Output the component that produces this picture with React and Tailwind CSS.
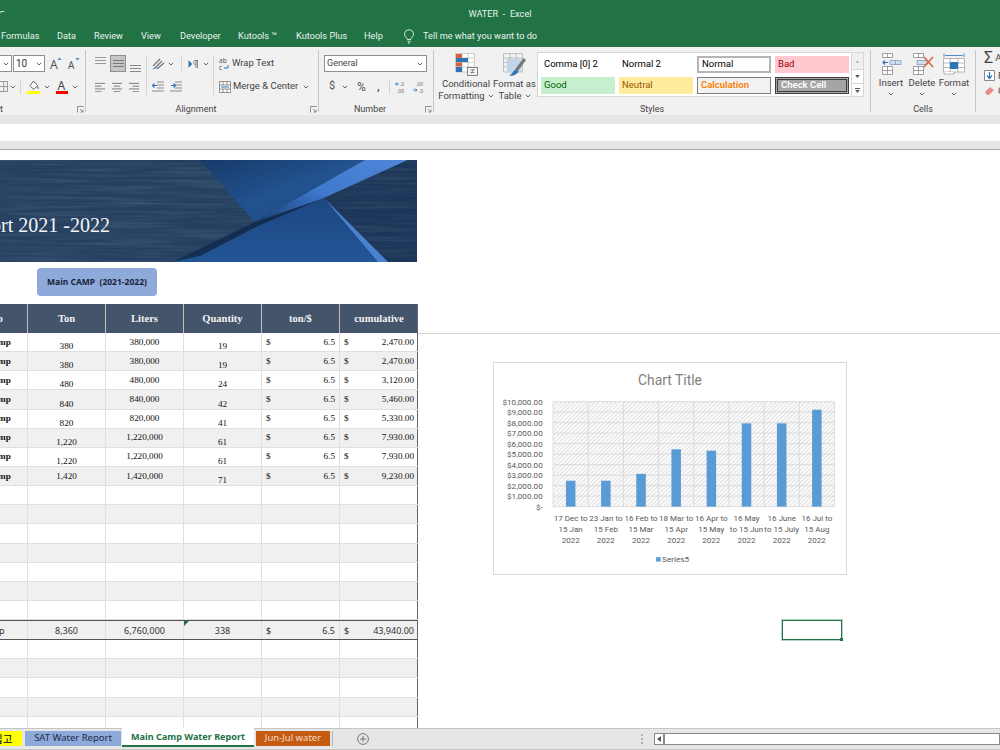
const menuTabs = [
  { label: 'Formulas', cls: 'ml-[1px] w-[56px]' },
  { label: 'Data', cls: 'w-[37px]' },
  { label: 'Review', cls: 'w-[47px]' },
  { label: 'View', cls: 'w-[39px]' },
  { label: 'Developer', cls: 'w-[58px]' },
  { label: 'Kutools ™', cls: 'w-[58px]' },
  { label: 'Kutools Plus', cls: 'w-[68px]' },
  { label: 'Help', cls: 'w-[39px]' },
]

const rows = [
  { ton: '380', liters: '380,000', qty: '19', total: '2,470.00' },
  { ton: '380', liters: '380,000', qty: '19', total: '2,470.00' },
  { ton: '480', liters: '480,000', qty: '24', total: '3,120.00' },
  { ton: '840', liters: '840,000', qty: '42', total: '5,460.00' },
  { ton: '820', liters: '820,000', qty: '41', total: '5,330.00' },
  { ton: '1,220', liters: '1,220,000', qty: '61', total: '7,930.00' },
  { ton: '1,220', liters: '1,220,000', qty: '61', total: '7,930.00' },
  { ton: '1,420', liters: '1,420,000', qty: '71', total: '9,230.00', tonTop: true },
]

const chartData = [
  { value: 2470, lines: ['17 Dec to', '15 Jan', '2022'] },
  { value: 2470, lines: ['23 Jan to', '15 Feb', '2022'] },
  { value: 3120, lines: ['16 Feb to', '15 Mar', '2022'] },
  { value: 5460, lines: ['18 Mar to', '15 Apr', '2022'] },
  { value: 5330, lines: ['16 Apr to', '15 May', '2022'] },
  { value: 7930, lines: ['16 May', 'to 15 Jun', '2022'] },
  { value: 7930, lines: ['16 June', 'to 15 July', '2022'] },
  { value: 9230, lines: ['16 Jul to', '15 Aug', '2022'] },
]

const yLabels = ['$10,000.00', '$9,000.00', '$8,000.00', '$7,000.00', '$6,000.00', '$5,000.00', '$4,000.00', '$3,000.00', '$2,000.00', '$1,000.00', '$-']

const grid = 'grid grid-cols-[28px_78px_78px_78px_78px_78px]'
const cell = 'border-r border-b border-[#dfdfdf] overflow-hidden'

function Chev({ className = '' }) {
  return (
    <svg viewBox="0 0 6 4" className={`h-[4px] w-[6px] shrink-0 ${className}`}>
      <path d="M0.8 0.8 3 3 5.2 0.8" fill="none" stroke="#666" strokeWidth="1" />
    </svg>
  )
}

function Lines({ widths, className = '' }) {
  return (
    <svg viewBox="0 0 12 10" className={`h-[10px] w-[12px] shrink-0 ${className}`}>
      {widths.map((w, i) => (
        <rect key={i} x={w[0]} y={i * 3 + 0.5} width={w[1]} height="1.2" fill="#8a8a8a" />
      ))}
    </svg>
  )
}

function Launcher() {
  return (
    <svg viewBox="0 0 7 7" className="absolute bottom-[2px] right-[1px] h-[7px] w-[7px]">
      <path d="M0.5 6.5V0.5H6.5M3 3 6 6M6 3.5V6H3.5" fill="none" stroke="#777" strokeWidth="0.8" />
    </svg>
  )
}

function Group({ width, label, children }) {
  return (
    <div className={`relative flex h-[62px] shrink-0 flex-col border-r border-[#c6c6c6] ${width}`}>
      <div className="min-h-0 flex-1">{children}</div>
      {label}
    </div>
  )
}

function GroupLabel({ children, launcher }) {
  return (
    <div className={`relative h-[12px] translate-y-[3px] text-center text-[9px] leading-[12px] text-[#444] ${launcher ? 'pr-[12px]' : ''}`}>
      {children}
      {launcher && <Launcher />}
    </div>
  )
}

function GrowFont({ up }) {
  return (
    <svg viewBox="0 0 12 13" className="h-[13px] w-[12px] overflow-visible">
      <text x="0" y="12" fontSize={up ? 12 : 10} fill="#555" fontFamily="Noto Sans, sans-serif">A</text>
      <path d={up ? 'M7.5 3 9.5 0.5 11.5 3Z' : 'M7.5 1 9.5 3.5 11.5 1Z'} fill="#4a8bc9" />
    </svg>
  )
}

function FontGroup() {
  return (
    <div className="flex flex-col gap-[6px] pt-[8px]">
      <div className="flex h-[17px] items-center">
        <div className="flex h-full w-[12px] items-center justify-end border-y border-r border-[#8f8f8f] bg-white pr-[2px]"><Chev /></div>
        <div className="ml-[1px] flex h-full w-[32px] items-center justify-between border border-[#8f8f8f] bg-white px-[2px] text-[10px] text-[#333]">
          10<Chev />
        </div>
        <div className="ml-[5px]"><GrowFont up /></div>
        <div className="ml-[6px]"><GrowFont /></div>
      </div>
      <div className="flex h-[17px] items-center">
        <svg viewBox="0 0 8 11" className="h-[11px] w-[8px]">
          <path d="M0 .5H7.5V10.5H0M0 5.5H7.5M3.7 .5V10.5" fill="none" stroke="#999" />
        </svg>
        <Chev className="ml-[2px]" />
        <div className="ml-[4px] h-[15px] w-px bg-[#d4d4d4]" />
        <svg viewBox="0 0 13 15" className="ml-[6px] h-[15px] w-[13px]">
          <path d="M3 6.5 6.5 2 10.5 6.5 6.5 10.5Z" fill="#fff" stroke="#666" />
          <path d="M10.5 6.5c1.4 1.7 1.8 2.8 0.8 3.4-1.2 .3-1.6-1.2-0.8-3.4Z" fill="#4a8bc9" />
          <rect x="0" y="12" width="13" height="3" fill="#ffff00" />
        </svg>
        <Chev className="ml-[4px]" />
        <svg viewBox="0 0 12 15" className="ml-[6px] h-[15px] w-[12px] overflow-visible">
          <text x="1.5" y="11" fontSize="12" fill="#444" fontFamily="Noto Sans, sans-serif">A</text>
          <rect x="0" y="12" width="12" height="3" fill="#ff0000" />
        </svg>
        <Chev className="ml-[4px]" />
      </div>
    </div>
  )
}

function Orient() {
  return (
    <svg viewBox="0 0 13 13" className="h-[13px] w-[13px]">
      <path d="M1 9 8 2M3 11 10 4M5 12 12 6" stroke="#777" strokeWidth="1.3" fill="none" />
      <path d="M1 12 5 10" stroke="#4a8bc9" strokeWidth="1.2" />
    </svg>
  )
}

function IndentIcon({ flip, className = '' }) {
  return (
    <svg viewBox="0 0 12 11" className={`h-[11px] w-[12px] ${className}`}>
      <path d="M5 1H12M5 4H12M5 7H12M0 10H12" stroke="#8a8a8a" strokeWidth="1.1" />
      <path d={flip ? 'M1 4.5H5M3.5 2.5 5.5 4.5 3.5 6.5' : 'M5 4.5H1M2.5 2.5 .5 4.5 2.5 6.5'} stroke="#2f75b5" strokeWidth="1.1" fill="none" />
    </svg>
  )
}

function AlignGroup() {
  return (
    <div className="flex pt-[8px] pl-[9px]">
      <div className="flex w-[51px] flex-col gap-[6px]">
        <div className="flex h-[17px] items-center">
          <svg viewBox="0 0 11 8" className="h-[8px] w-[11px] self-start mt-[2px]"><path d="M0 .5H11M0 3.5H11M0 6.5H11" stroke="#999" /></svg>
          <div className="ml-[4px] flex h-[17px] w-[16px] items-center justify-center border border-[#8e8e8e] bg-[#c6c6c6]">
            <svg viewBox="0 0 11 7" className="h-[7px] w-[11px]"><path d="M0 .5H11M0 3.5H11M0 6.5H11" stroke="#777" /></svg>
          </div>
          <svg viewBox="0 0 11 7" className="ml-[4px] mt-[9px] h-[7px] w-[11px]"><path d="M0 .5H11M0 3.5H11M0 6.5H11" stroke="#888" /></svg>
        </div>
        <div className="flex h-[17px] items-center gap-[6px]">
          <Lines widths={[[0, 11], [0, 7], [0, 11], [0, 7]]} className="!w-[11px]" />
          <Lines widths={[[0, 11], [2, 7], [0, 11], [2, 7]]} className="!w-[11px]" />
          <Lines widths={[[0, 11], [4, 7], [0, 11], [4, 7]]} className="!w-[11px]" />
        </div>
      </div>
      <div className="flex w-[67px] flex-col gap-[6px] border-l border-[#d4d4d4] pl-[5px]">
        <div className="flex h-[17px] items-center">
          <Orient />
          <Chev className="ml-[3px]" />
          <div className="ml-[7px] h-[15px] w-px bg-[#d4d4d4]" />
          <svg viewBox="0 0 10 8" className="ml-[6px] h-[8px] w-[10px]">
            <path d="M0 0V8M1 1 4 4 1 7Z" fill="#2f75b5" stroke="#2f75b5" strokeWidth="0.6" />
            <path d="M6 .5H10M8 .5V8M9.6 .5V8M6 1.5C5 3 6 4.5 8 4.5" stroke="#666" fill="none" strokeWidth="0.8" />
          </svg>
          <Chev className="ml-[5px]" />
        </div>
        <div className="flex h-[17px] items-center">
          <IndentIcon />
          <IndentIcon flip className="ml-[6px]" />
        </div>
      </div>
      <div className="flex flex-col gap-[6px] border-l border-[#d4d4d4] pl-[5px]">
        <div className="flex h-[17px] items-center text-[9.5px] text-[#444]">
          <svg viewBox="0 0 10 14" className="h-[14px] w-[10px] overflow-visible">
            <text x="0" y="5.5" fontSize="6.5" fill="#555" fontFamily="Noto Sans, sans-serif">ab</text>
            <text x="0" y="13" fontSize="6.5" fill="#555" fontFamily="Noto Sans, sans-serif">c</text>
            <path d="M5 11H9V8" stroke="#2f75b5" fill="none" />
          </svg>
          <span className="ml-[3px] whitespace-nowrap">Wrap Text</span>
        </div>
        <div className="flex h-[17px] items-center text-[9.5px] text-[#444]">
          <svg viewBox="0 0 12 12" className="h-[12px] w-[12px]">
            <path d="M.5 .5H11.5V11.5H.5ZM.5 4H11.5M.5 8H11.5M4 .5V4M8 .5V4M4 8V11.5M8 8V11.5" fill="#fff" stroke="#777" strokeWidth="0.8" />
            <path d="M2 6H10" stroke="#2f75b5" />
          </svg>
          <span className="ml-[2px] w-[70px] whitespace-nowrap">Merge &amp; Center</span>
          <Chev />
        </div>
      </div>
    </div>
  )
}

function NumberGroup() {
  return (
    <div className="flex flex-col gap-[6px] pt-[8px] pl-[5px]">
      <div className="flex h-[17px] w-[103px] items-center justify-between border border-[#8f8f8f] bg-white px-[2px] text-[9px] text-[#444]">
        General
        <Chev className="mr-[1px]" />
      </div>
      <div className="flex h-[17px] items-center pl-[5px] text-[11px] text-[#555]">
        <span className="w-[8px]">$</span>
        <Chev className="ml-[5px]" />
        <span className="ml-[9px] w-[11px] text-[12px] leading-none">%</span>
        <span className="ml-[9px] w-[5px] font-bold leading-none">,</span>
        <div className="ml-[7px] h-[15px] w-px bg-[#d4d4d4]" />
        <svg viewBox="0 0 12 12" className="ml-[5px] h-[12px] w-[12px] overflow-visible">
          <path d="M4 3H0.5M2 1.5 .5 3 2 4.5" fill="none" stroke="#2f75b5" strokeWidth="0.9" />
          <text x="5" y="5" fontSize="5" fill="#666" fontFamily="Noto Sans, sans-serif">.0</text>
          <text x="2" y="11.5" fontSize="5" fill="#666" fontFamily="Noto Sans, sans-serif">.00</text>
        </svg>
        <svg viewBox="0 0 12 12" className="ml-[6px] h-[12px] w-[12px] overflow-visible">
          <text x="3" y="5" fontSize="5" fill="#666" fontFamily="Noto Sans, sans-serif">.00</text>
          <path d="M0 9H4M2.5 7.5 4 9 2.5 10.5" fill="none" stroke="#2f75b5" strokeWidth="0.9" />
          <text x="6" y="11.5" fontSize="5" fill="#666" fontFamily="Noto Sans, sans-serif">.0</text>
        </svg>
      </div>
    </div>
  )
}

function CondIcon() {
  return (
    <svg viewBox="0 0 23 23" className="h-[23px] w-[23px]">
      <path d="M.5 .5H19.5V19H.5ZM.5 5H19.5M.5 9.5H19.5M.5 14H19.5M7 .5V19M13 .5V19" fill="#fff" stroke="#bbb" strokeWidth="0.7" />
      <rect x="1" y="1" width="6" height="4" fill="#d9603b" />
      <rect x="1" y="5" width="12" height="4" fill="#2f75b5" />
      <rect x="1" y="9.5" width="6" height="4" fill="#d9603b" />
      <rect x="1" y="14" width="6" height="5" fill="#2f75b5" />
      <rect x="12.5" y="14.5" width="10" height="8" fill="#f4f4f4" stroke="#666" strokeWidth="0.8" />
      <path d="M15.5 17H19.5M15.5 19.5H19.5M18.5 16 16.5 20.5" stroke="#555" strokeWidth="0.6" />
    </svg>
  )
}

function TableIcon() {
  return (
    <svg viewBox="0 0 23 23" className="h-[23px] w-[23px]">
      <path d="M.5 .5H19.5V19H.5ZM.5 5H19.5M.5 9.5H19.5M.5 14H19.5M7 .5V19M13 .5V19" fill="#eef1f5" stroke="#aaa" strokeWidth="0.7" />
      <path d="M4 6H18V19H4Z" fill="#c3d4e8" />
      <path d="M12 16.5 20.5 5 23 7 15 18Z" fill="#777" />
      <path d="M6 22.5C9 21.5 10 17.5 13 16.5L15.5 18.5C14 21.5 10 23.5 6 22.5Z" fill="#2f75b5" />
    </svg>
  )
}

function StyleCell({ className, children }) {
  return (
    <div className={`flex h-[17px] w-[74px] items-center px-[3px] text-[9.5px] ${className}`}>{children}</div>
  )
}

function StylesGroup() {
  return (
    <div className="flex pt-[2px]">
      <div className="flex w-[56px] flex-col items-center pt-[1px] pl-[8px] text-[9.5px] leading-[12px] text-[#444]">
        <CondIcon />
        <span className="mt-[2px] whitespace-nowrap">Conditional</span>
        <span className="flex items-center gap-[3px] whitespace-nowrap">Formatting <Chev /></span>
      </div>
      <div className="ml-[2px] flex w-[45px] flex-col items-center pt-[1px] text-[9.5px] leading-[12px] text-[#444]">
        <TableIcon />
        <span className="mt-[2px] whitespace-nowrap">Format as</span>
        <span className="flex items-center gap-[3px]">Table <Chev /></span>
      </div>
      <div className="flex h-[45px] w-[327px] border border-[#d6d6d6] bg-white">
        <div className="grid w-[314px] grid-cols-[74px_74px_74px_74px] content-center gap-x-[4px] gap-y-[4px] pl-[3px]">
          <StyleCell className="text-black">Comma [0] 2</StyleCell>
          <StyleCell className="text-black">Normal 2</StyleCell>
          <StyleCell className="border-2 border-[#b5b5b5] text-black">Normal</StyleCell>
          <StyleCell className="bg-[#ffc7ce] text-[#9c0006]">Bad</StyleCell>
          <StyleCell className="bg-[#c6efce] text-[#006100]">Good</StyleCell>
          <StyleCell className="bg-[#ffeb9c] text-[#9c5700]">Neutral</StyleCell>
          <StyleCell className="border border-[#7f7f7f] bg-[#f2f2f2] font-semibold text-[#fa7d00]">Calculation</StyleCell>
          <StyleCell className="border-[3px] border-double border-[#3f3f3f] bg-[#a5a5a5] font-semibold text-white">Check Cell</StyleCell>
        </div>
        <div className="flex w-[12px] flex-col border-l border-[#d6d6d6]">
          <div className="flex h-[16px] items-center justify-center bg-[#f0f0f0]">
            <svg viewBox="0 0 6 4" className="h-[3px] w-[5px]"><path d="M0 4 3 0 6 4Z" fill="#c0c0c0" /></svg>
          </div>
          <div className="flex h-[15px] items-center justify-center border-y border-[#d6d6d6]">
            <svg viewBox="0 0 6 4" className="h-[3px] w-[5px]"><path d="M0 0 3 4 6 0Z" fill="#555" /></svg>
          </div>
          <div className="flex flex-1 flex-col items-center justify-center gap-[1px]">
            <div className="h-px w-[5px] bg-[#555]" />
            <svg viewBox="0 0 6 4" className="h-[3px] w-[5px]"><path d="M0 0 3 4 6 0Z" fill="#555" /></svg>
          </div>
        </div>
      </div>
    </div>
  )
}

function CellsIcon({ kind }) {
  return (
    <svg viewBox="0 0 24 22" className="h-[22px] w-[24px]">
      {kind !== 'format' && (
        <g fill="#fff" stroke="#888" strokeWidth="0.8">
          <path d="M3.5 .5H13.5V4.5H3.5ZM8.5 .5V4.5" />
          <path d="M3.5 13.5H13.5V21.5H3.5ZM3.5 17.5H13.5M8.5 13.5V21.5" />
        </g>
      )}
      {kind === 'insert' && (
        <g>
          <path d="M11 7.5H22V11.5H11ZM16.5 7.5V11.5" fill="#d2dfee" stroke="#7a9cc6" strokeWidth="0.8" />
          <path d="M9 9.5H4M6 7.5 4 9.5 6 11.5" fill="none" stroke="#2f75b5" strokeWidth="1.1" />
        </g>
      )}
      {kind === 'delete' && (
        <g>
          <path d="M7 7.5H17V11.5H7Z" fill="#d2dfee" stroke="#7a9cc6" strokeWidth="0.8" />
          <path d="M14 4 23 14M23 4 14 14" stroke="#d9603b" strokeWidth="1.5" />
        </g>
      )}
      {kind === 'format' && (
        <g>
          <path d="M2 .5V4M22 .5V4M3 2.5H21" stroke="#2f75b5" strokeWidth="0.8" fill="none" />
          <path d="M1.5 5.5H22.5V19H1.5ZM1.5 10H22.5M1.5 14.5H22.5M8 5.5V19M16 5.5V19" fill="#fff" stroke="#999" strokeWidth="0.7" />
          <rect x="8" y="9" width="8" height="7" fill="#2f75b5" />
          <path d="M2 19V21H12V19" fill="#fff" stroke="#999" strokeWidth="0.7" />
        </g>
      )}
    </svg>
  )
}

function CellBtn({ label, kind, width }) {
  return (
    <div className={`flex flex-col items-center text-[9.5px] leading-[12px] text-[#444] ${width}`}>
      <CellsIcon kind={kind} />
      <span className="mt-[2px]">{label}</span>
      <Chev className="mt-[3px]" />
    </div>
  )
}

function Ribbon() {
  return (
    <div className="flex h-[68px] items-start overflow-hidden bg-[#f1f1f1] pt-[3px]">
      <Group width="w-[86px]" label={<GroupLabel launcher><span className="block pr-[72px]">t</span></GroupLabel>}><div className="-mt-[3px]"><FontGroup /></div></Group>
      <Group width="w-[233px]" label={<GroupLabel launcher>Alignment</GroupLabel>}><div className="-mt-[3px]"><AlignGroup /></div></Group>
      <Group width="w-[115px]" label={<GroupLabel launcher>Number</GroupLabel>}><div className="-mt-[3px]"><NumberGroup /></div></Group>
      <Group width="w-[437px]" label={<GroupLabel>Styles</GroupLabel>}><StylesGroup /></Group>
      <Group width="w-[105px]" label={<GroupLabel>Cells</GroupLabel>}>
        <div className="flex pt-[3px] pl-[7px]">
          <CellBtn label="Insert" kind="insert" width="w-[26px]" />
          <CellBtn label="Delete" kind="delete" width="w-[36px]" />
          <CellBtn label="Format" kind="format" width="w-[28px]" />
        </div>
      </Group>
      <div className="flex flex-col gap-[5px] pl-[8px] text-[9.5px] leading-none text-[#444]">
        <div className="flex items-center gap-[2px] pt-[1px]"><span className="text-[16px] leading-[14px] text-[#444]">Σ</span><span>A</span></div>
        <div className="flex items-center gap-[3px]">
          <svg viewBox="0 0 11 11" className="h-[11px] w-[11px]"><path d="M.5 .5H10.5V10.5H.5Z" fill="#fff" stroke="#888" /><path d="M5.5 2V8M3 5.5 5.5 8.5 8 5.5" fill="none" stroke="#2f75b5" strokeWidth="1.2" /></svg>
          <span>F</span>
        </div>
        <div className="flex items-center gap-[3px]">
          <svg viewBox="0 0 11 10" className="h-[10px] w-[11px]"><path d="M1 6 6 1 10 4 5 9H3Z" fill="#e88a8a" /></svg>
          <span>C</span>
        </div>
      </div>
    </div>
  )
}

function Banner() {
  return (
    <div className="relative h-[102px] w-[417px] overflow-hidden">
      <svg viewBox="0 0 417 102" className="block h-[102px] w-[417px]">
        <defs>
          <filter id="streak" x="0" y="0" width="100%" height="100%">
            <feTurbulence type="fractalNoise" baseFrequency="0.012 0.35" numOctaves="3" seed="4" />
            <feColorMatrix values="0 0 0 0 1  0 0 0 0 1  0 0 0 0 1  1.5 0 0 0 -0.55" />
          </filter>
          <linearGradient id="sliver" x1="0" y1="1" x2="1" y2="0">
            <stop offset="0" stopColor="#163a70" />
            <stop offset="0.45" stopColor="#3f78cc" />
            <stop offset="1" stopColor="#4f86d8" />
          </linearGradient>
          <linearGradient id="topBlue" x1="0" y1="0" x2="1" y2="1">
            <stop offset="0" stopColor="#173a68" />
            <stop offset="0.5" stopColor="#22528f" />
            <stop offset="1" stopColor="#1d4a84" />
          </linearGradient>
          <linearGradient id="lowBlue" x1="0" y1="0" x2="0" y2="1">
            <stop offset="0" stopColor="#1c4781" />
            <stop offset="1" stopColor="#235596" />
          </linearGradient>
          <clipPath id="rightShape"><path d="M324 38 408 0H417V102H388Z" /></clipPath>
        </defs>
        <rect width="417" height="102" fill="#243f60" />
        <rect width="417" height="102" filter="url(#streak)" opacity="0.13" />
        <path d="M200 0H365L255 62Z" fill="url(#topBlue)" />
        <path d="M172 102 255 62 324 38 388 102Z" fill="url(#lowBlue)" />
        <path d="M172 102 255 62 324 38 258 66 200 96Z" fill="#10233f" opacity="0.75" />
        <path d="M255 62 365 0H408L324 38Z" fill="url(#sliver)" />
        <path d="M324 38 408 0H417V102H388Z" fill="#1c3659" />
        <g clipPath="url(#rightShape)">
          <rect width="417" height="102" filter="url(#streak)" opacity="0.1" />
        </g>
        <path d="M324 38 388 102H378Z" fill="#4a80d0" />
      </svg>
      <span className="absolute top-[52px] -left-[9px] whitespace-nowrap font-['Liberation_Serif',serif] text-[20px] leading-[26px] text-[#f4f4f4]">ort 2021 -2022</span>
    </div>
  )
}

function BlankRow({ gray }) {
  return (
    <div className={`${grid} h-[19.15px] ${gray ? 'bg-[#f0f0f0]' : 'bg-white'}`}>
      {[0, 1, 2, 3, 4].map((c) => <div key={c} className={cell} />)}
      <div className="border-b border-[#dfdfdf]" />
    </div>
  )
}

function TonTable() {
  return (
    <div className="w-[418px] border-r border-[#5f6672] font-['Liberation_Serif',serif] text-[9.2px] leading-[9px] text-[#111]">
      <div className={`${grid} h-[29px] bg-[#44546a] text-[10.5px] font-bold text-[#f2f2f2]`}>
        <div className="flex items-center overflow-hidden border-r border-[#c9bdb5]"><span className="-ml-[3px]">p</span></div>
        {['Ton', 'Liters', 'Quantity', 'ton/$', 'cumulative'].map((h, i) => (
          <div key={h} className={`flex items-center justify-center ${i < 4 ? 'border-r border-[#c9bdb5]' : ''}`}>{h}</div>
        ))}
      </div>
      {rows.map((r, i) => (
        <div key={i} className={`${grid} h-[19.15px] ${i % 2 ? 'bg-[#f0f0f0]' : 'bg-white'}`}>
          <div className={`${cell} flex items-center font-bold`}><span className="-ml-[2px]">mp</span></div>
          <div className={`${cell} flex justify-center ${r.tonTop ? 'items-center' : 'items-end'}`}>{r.ton}</div>
          <div className={`${cell} flex items-center justify-center`}>{r.liters}</div>
          <div className={`${cell} flex items-end justify-center`}>{r.qty}</div>
          <div className={`${cell} flex items-center justify-between px-[4px]`}><span>$</span><span>6.5</span></div>
          <div className={`${cell} flex items-center justify-between px-[4px] border-r-0`}><span>$</span><span>{r.total}</span></div>
        </div>
      ))}
      {Array.from({ length: 7 }).map((_, i) => (
        <BlankRow key={i} gray={i % 2 === 1} />
      ))}
      <div className={`${grid} relative h-[20px] border-y border-[#555] bg-[#f0f0f0] font-['Noto_Sans',sans-serif] text-[9px] text-[#333]`}>
        <div className="flex items-center overflow-hidden border-r border-[#dfdfdf]"><span className="-ml-[1px]">p</span></div>
        <div className="flex items-center justify-center border-r border-[#dfdfdf]">8,360</div>
        <div className="flex items-center justify-center border-r border-[#dfdfdf]">6,760,000</div>
        <div className="flex items-center justify-center border-r border-[#dfdfdf]">338</div>
        <div className="flex items-center justify-between border-r border-[#dfdfdf] px-[4px]"><span>$</span><span>6.5</span></div>
        <div className="flex items-center justify-between px-[4px]"><span>$</span><span>43,940.00</span></div>
        <svg viewBox="0 0 5 5" className="absolute top-0 left-[184px] h-[5px] w-[5px]"><path d="M0 0H5L0 5Z" fill="#1e6b3a" /></svg>
      </div>
      {Array.from({ length: 5 }).map((_, i) => (
        <BlankRow key={i} gray={i % 2 === 1} />
      ))}
    </div>
  )
}

function Chart() {
  const plotX = 59
  const plotW = 284
  const top = 39
  const bottom = 145
  const step = plotW / 8
  return (
    <div className="absolute top-[212px] left-[493px] h-[213px] w-[354px] border border-[#d9d9d9] bg-white">
      <svg viewBox="0 0 354 213" className="block h-[211px] w-[352px] font-['Roboto',sans-serif]">
        <defs>
          <pattern id="hatch" width="3" height="3" patternUnits="userSpaceOnUse" patternTransform="rotate(45)">
            <rect width="3" height="3" fill="#fff" />
            <rect width="1.3" height="3" fill="#e2e2e2" />
          </pattern>
        </defs>
        <text x="177" y="22" textAnchor="middle" fontSize="14" fill="#7f7f7f">Chart Title</text>
        <rect x={plotX} y={top} width={plotW} height={bottom - top} fill="url(#hatch)" />
        {yLabels.map((l, i) => {
          const y = top + i * 10.6
          return (
            <g key={l}>
              <line x1={plotX} x2={plotX + plotW} y1={y} y2={y} stroke="#d9d9d9" strokeWidth="0.9" />
              <text x="48.5" y={y + 3} textAnchor="end" fontSize="8.2" fill="#595959">{l}</text>
            </g>
          )
        })}
        {chartData.map((d, i) => {
          const cx = plotX + step * i + step / 2
          const h = (d.value / 10000) * (bottom - top)
          return (
            <g key={i}>
              <line x1={plotX + step * i} x2={plotX + step * i} y1={top} y2={bottom} stroke="#d9d9d9" strokeWidth="0.9" />
              <rect x={cx - 4.8} y={bottom - h} width="9.6" height={h} fill="#5b9bd5" />
              {d.lines.map((t, j) => (
                <text key={j} x={cx} y={159.5 + j * 11} textAnchor="middle" fontSize="8.1" fill="#595959">{t}</text>
              ))}
            </g>
          )
        })}
        <line x1={plotX + plotW} x2={plotX + plotW} y1={top} y2={bottom} stroke="#d9d9d9" strokeWidth="0.9" />
        <rect x="163" y="196" width="4.5" height="4.5" fill="#5b9bd5" />
        <text x="169" y="201" fontSize="8.2" fill="#595959">Series5</text>
      </svg>
    </div>
  )
}

function SelectedCell() {
  return (
    <div className="absolute top-[470px] left-[782px] h-[20px] w-[60px] border-[1.5px] border-[#217346] outline outline-1 outline-[#b5d3c0]">
      <div className="absolute -right-[2px] -bottom-[2px] h-[3px] w-[3px] bg-[#217346]" />
    </div>
  )
}

function SheetTabs() {
  return (
    <div className="flex h-[21px] items-start border-t border-[#c6c6c6] bg-[#e6e6e6] font-['Noto_Sans',sans-serif] text-[9.5px]">
      <div className="mt-[2px] flex h-[15px] w-[22px] items-center overflow-hidden bg-[#ffff00] font-['Noto_Sans_CJK_KR','Noto_Sans',sans-serif] text-[10.5px] text-black">
        <span className="-ml-[7px] whitespace-nowrap">입고</span>
      </div>
      <div className="ml-[3px] mt-[2px] flex h-[15px] w-[96px] items-center justify-center bg-[#8eaadb] text-[#1f2a44]">SAT Water Report</div>
      <div className="ml-[1px] -mt-[1px] flex h-[19px] w-[132px] items-center justify-center border-b-2 border-[#217346] bg-white text-[9.1px] font-bold text-[#217346]">Main Camp Water Report</div>
      <div className="ml-[2px] mt-[2px] flex h-[15px] w-[74px] items-center justify-center bg-[#c55a11] text-[#f6dcc8]">Jun-Jul water</div>
      <div className="ml-[2px] mt-[2px] h-[15px] w-px bg-[#b5b5b5]" />
      <svg viewBox="0 0 12 12" className="ml-[24px] mt-[4px] h-[12px] w-[12px]">
        <circle cx="6" cy="6" r="5.4" fill="none" stroke="#777" />
        <path d="M3 6H9M6 3V9" stroke="#777" />
      </svg>
      <div className="ml-[272px] mt-[5px] flex flex-col gap-[2px]">
        <div className="h-[2px] w-[2px] bg-[#b0b0b0]" />
        <div className="h-[2px] w-[2px] bg-[#b0b0b0]" />
        <div className="h-[2px] w-[2px] bg-[#b0b0b0]" />
      </div>
      <div className="ml-[11px] mt-[4px] flex h-[12px] flex-1 border border-[#8a8a8a] bg-white">
        <div className="flex w-[10px] items-center justify-center border-r-2 border-[#8a8a8a]">
          <svg viewBox="0 0 4 6" className="h-[6px] w-[4px]"><path d="M4 0 0 3 4 6Z" fill="#555" /></svg>
        </div>
      </div>
    </div>
  )
}

export default function App() {
  return (
    <div className="flex h-[750px] w-[1000px] flex-col overflow-hidden bg-white font-['Roboto',sans-serif]">
      <header className="h-[47px] bg-[#217346] text-[9.2px] text-[#e8f1ec]">
        <div className="relative h-[23px] pt-[7px] text-center leading-[13px]">
          <span className="absolute top-[5px] left-0 text-[8px]">⌐</span>
          WATER&nbsp; - &nbsp;Excel
        </div>
        <nav className="flex h-[24px] items-center pt-[2px]">
          {menuTabs.map((t) => (
            <span key={t.label} className={`shrink-0 ${t.cls}`}>{t.label}</span>
          ))}
          <svg viewBox="0 0 12 15" className="h-[15px] w-[12px]">
            <path d="M6 .7a4.4 4.4 0 0 0-2.6 8c.6.5.8 1.1.8 1.8h3.6c0-.7.2-1.3.8-1.8A4.4 4.4 0 0 0 6 .7ZM4.4 12.3h3.2M5 14h2" fill="none" stroke="#e8f1ec" strokeWidth="0.9" />
          </svg>
          <span className="ml-[8px] whitespace-nowrap">Tell me what you want to do</span>
        </nav>
      </header>
      <Ribbon />
      <div className="h-[9px] bg-[#e6e6e6]" />
      <div className="h-[17px] bg-white" />
      <div className="h-[9px] border-b border-[#a6a6a6] bg-[#e6e6e6]" />
      <main className="relative flex-1 overflow-hidden">
        <div className="pt-[10px]">
          <Banner />
          <div className="flex h-[42px] items-start pt-[6px] pl-[37px]">
            <div className="flex h-[28px] w-[120px] items-center justify-center rounded-[4px] bg-[#8eaadb] font-['Noto_Sans',sans-serif] text-[8.5px] font-bold whitespace-pre text-[#1a2338]">Main CAMP  (2021-2022)</div>
          </div>
          <div className="flex">
            <TonTable />
            <div className="h-[30px] flex-1 border-b border-[#d4d4d4]" />
          </div>
        </div>
        <Chart />
        <SelectedCell />
      </main>
      <SheetTabs />
      <div className="h-[1px] bg-[#c6c6c6]" />
    </div>
  )
}
